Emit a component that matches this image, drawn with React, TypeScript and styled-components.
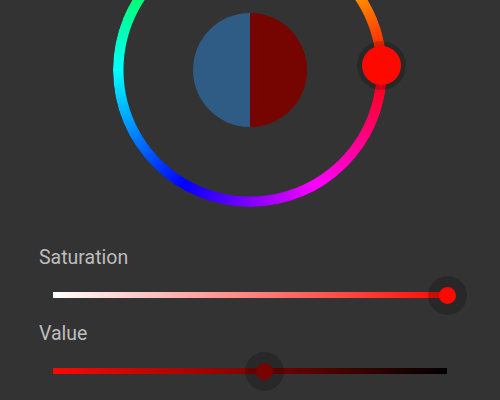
import styled, { createGlobalStyle } from 'styled-components';

const GlobalStyle = createGlobalStyle`
  html, body {
    margin: 0;
    padding: 0;
    background-color: #333333;
  }
`;

const HUE = 2;
const SATURATION = 1;
const VALUE = 0.463;
const RING = 274;
const STROKE = 11;

const hsvToRgb = (h: number, s: number, v: number) => {
  const f = (n: number) => {
    const k = (n + h / 60) % 6;
    return Math.round(255 * (v - v * s * Math.max(0, Math.min(k, 4 - k, 1))));
  };
  return `rgb(${f(5)}, ${f(3)}, ${f(1)})`;
};

const Page = styled.div`
  width: 500px;
  height: 400px;
  overflow: hidden;
  display: flex;
  flex-direction: column;
  font-family: Roboto, 'Liberation Sans', sans-serif;
`;

const WheelArea = styled.div`
  height: 246px;
  display: flex;
  justify-content: center;
  align-items: flex-start;
`;

const Ring = styled.div`
  position: relative;
  width: ${RING}px;
  height: ${RING}px;
  margin-top: -67px;
  flex-shrink: 0;
  display: flex;
  align-items: center;
  justify-content: center;

  &::before {
    content: '';
    position: absolute;
    inset: 0;
    border-radius: 50%;
    background: conic-gradient(from 90deg, #ff0000, #ff00ff, #0000ff, #00ffff, #00ff00, #ffff00, #ff0000);
    -webkit-mask: radial-gradient(farthest-side, transparent calc(100% - ${STROKE}px), #000 calc(100% - ${STROKE - 1}px));
    mask: radial-gradient(farthest-side, transparent calc(100% - ${STROKE}px), #000 calc(100% - ${STROKE - 1}px));
  }
`;

const Swatch = styled.div`
  width: 114px;
  height: 114px;
  border-radius: 50%;
  overflow: hidden;
  display: flex;
`;

const SwatchHalf = styled.div<{ $color: string }>`
  flex: 1;
  background-color: ${(p) => p.$color};
`;

const Knob = styled.div<{ $color: string }>`
  position: absolute;
  width: 49px;
  height: 49px;
  margin: -24.5px 0 0 -24.5px;
  border-radius: 50%;
  background-color: rgba(0, 0, 0, 0.2);
  display: flex;
  align-items: center;
  justify-content: center;

  &::after {
    content: '';
    width: 39px;
    height: 39px;
    border-radius: 50%;
    background-color: ${(p) => p.$color};
  }
`;

const SliderBlock = styled.div`
  display: flex;
  flex-direction: column;
  padding-left: 39px;
  & + & {
    margin-top: 7px;
  }
`;

const Label = styled.div`
  font-size: 19.5px;
  line-height: 24px;
  color: #bdbdbd;
`;

const TrackRow = styled.div`
  position: relative;
  height: 40px;
  margin: 5px 0 0 14px;
  width: 394px;
  display: flex;
  align-items: center;
`;

const Track = styled.div<{ $from: string; $to: string }>`
  width: 100%;
  height: 6px;
  background: linear-gradient(to right, ${(p) => p.$from}, ${(p) => p.$to});
`;

const Thumb = styled.div<{ $color: string }>`
  position: absolute;
  top: 50%;
  width: 39px;
  height: 39px;
  margin: -19.5px 0 0 -19.5px;
  border-radius: 50%;
  background-color: rgba(0, 0, 0, 0.2);
  display: flex;
  align-items: center;
  justify-content: center;

  &::after {
    content: '';
    width: 17px;
    height: 17px;
    border-radius: 50%;
    background-color: ${(p) => p.$color};
  }
`;

export default function App() {
  const pure = hsvToRgb(HUE, 1, 1);
  const current = hsvToRgb(HUE, SATURATION, VALUE);
  const r = RING / 2 - STROKE / 2;
  const rad = (HUE * Math.PI) / 180;
  const knobX = RING / 2 + r * Math.cos(rad);
  const knobY = RING / 2 - r * Math.sin(rad);

  return (
    <Page>
      <GlobalStyle />
      <WheelArea>
        <Ring>
          <Swatch>
            <SwatchHalf $color="#2f5c84" />
            <SwatchHalf $color={current} />
          </Swatch>
          <Knob $color={pure} style={{ left: knobX, top: knobY }} />
        </Ring>
      </WheelArea>
      <SliderBlock>
        <Label>Saturation</Label>
        <TrackRow>
          <Track $from="#ffffff" $to={pure} />
          <Thumb $color={hsvToRgb(HUE, SATURATION, 1)} style={{ left: `${SATURATION * 100}%` }} />
        </TrackRow>
      </SliderBlock>
      <SliderBlock>
        <Label>Value</Label>
        <TrackRow>
          <Track $from={pure} $to="#000000" />
          <Thumb $color={current} style={{ left: `${(1 - VALUE) * 100}%` }} />
        </TrackRow>
      </SliderBlock>
    </Page>
  );
}
